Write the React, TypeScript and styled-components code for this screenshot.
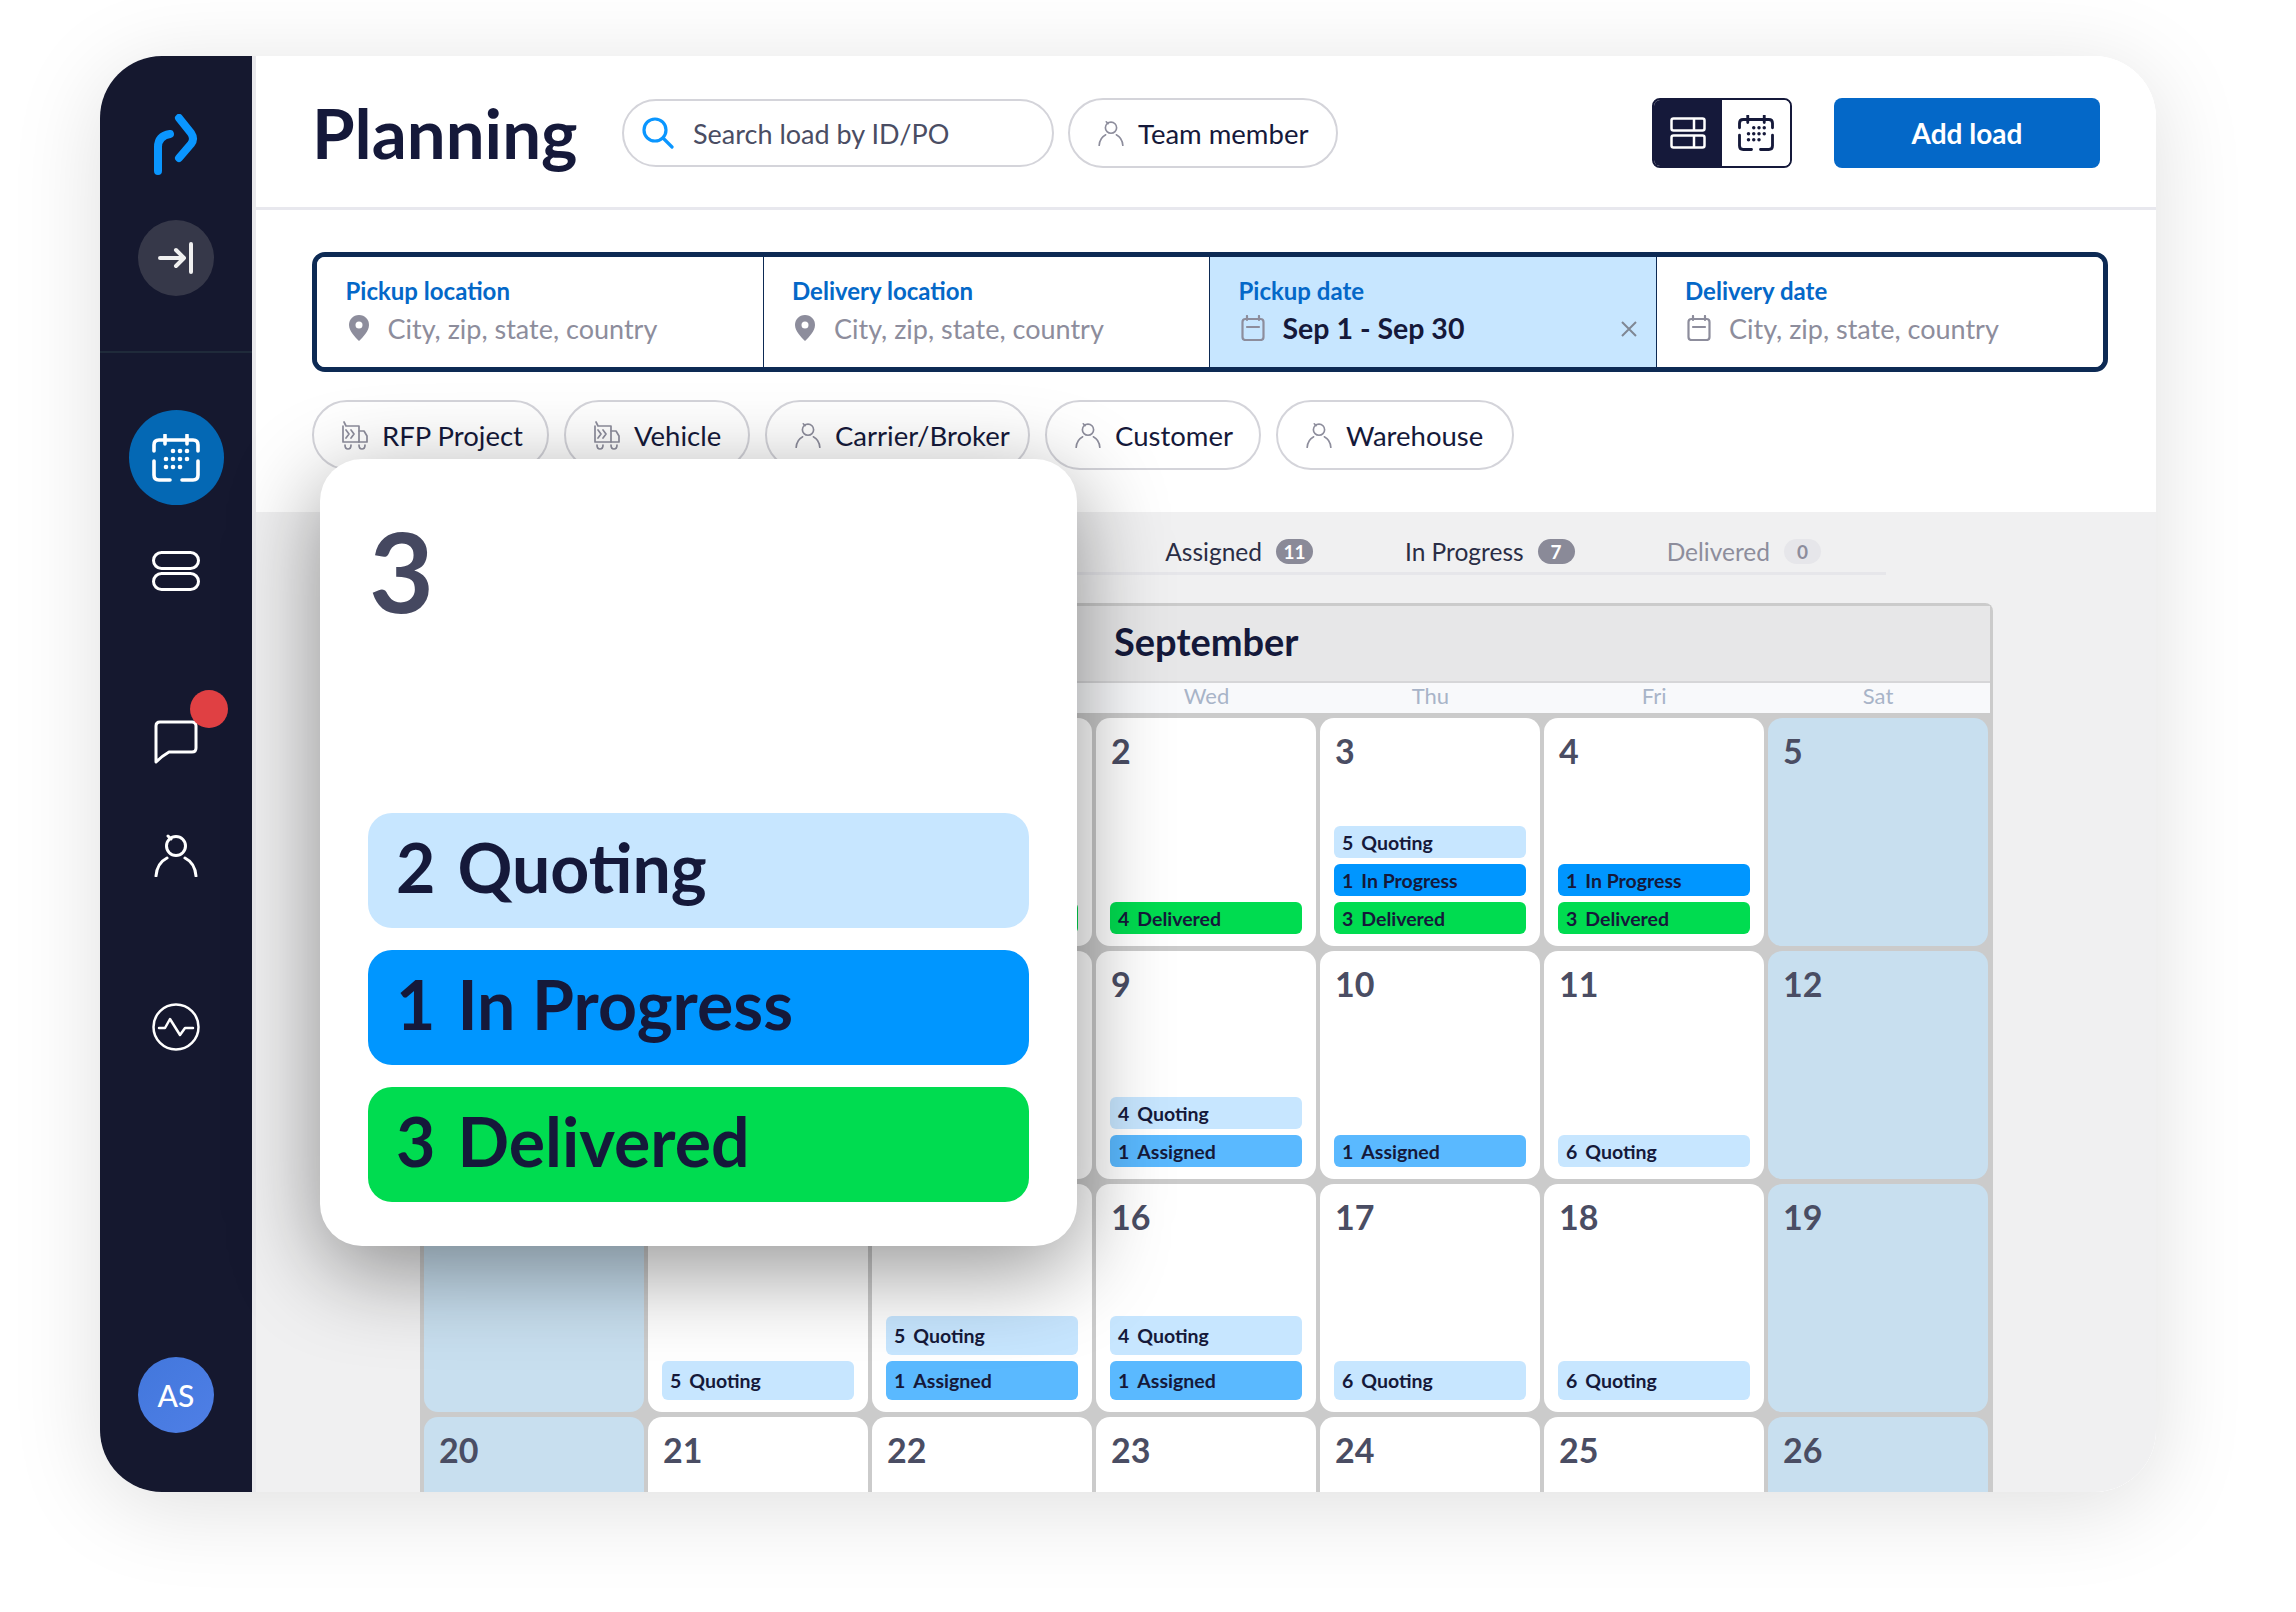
import React from "react";
import styled, { createGlobalStyle } from "styled-components";

const Global = createGlobalStyle`
  html, body { margin: 0; padding: 0; background: #fff; }
  body { font-family: "Lato", "Noto Sans", sans-serif; color: #15193a; }
  * { box-sizing: border-box; }
`;

const Page = styled.div`
  width: 2296px; height: 1612px; overflow: hidden; background: #fff;
  padding: 56px 0 0 100px;
`;
const Frame = styled.div`
  position: relative; display: flex; width: 2056px; height: 1436px; border-radius: 62px;
  overflow: hidden; background: #fff;
`;
const FrameShadow = styled.div`
  width: 2056px; height: 1436px; border-radius: 62px;
  box-shadow: 0 14px 90px rgba(0, 0, 0, 0.13);
`;

const Sidebar = styled.aside`
  width: 152px; flex: none; background: #15182f; display: flex; flex-direction: column; align-items: center;
  padding-top: 58px;
`;
const LogoMark = styled.svg`width: 50px; height: 62px; flex: none;`;
const CollapseButton = styled.div`
  width: 76px; height: 76px; border-radius: 50%; background: #363849; margin-top: 44px; flex: none;
  display: flex; align-items: center; justify-content: center;
`;
const SideDivider = styled.div`width: 100%; height: 2px; background: #1f2a3a; margin-top: 55px; flex: none;`;
const ActiveItem = styled.div`
  width: 95px; height: 95px; border-radius: 50%; background: #0468b4; margin-top: 57px; flex: none;
  display: flex; align-items: center; justify-content: center;
`;
const NavItem = styled.div<{ $top: number }>`
  position: relative; width: 48px; flex: none; margin-top: ${(p) => p.$top}px;
  display: flex; justify-content: center;
`;
const RedDot = styled.span`
  position: absolute; left: 38px; top: -30px; width: 38px; height: 38px; border-radius: 50%; background: #e04043;
`;
const Avatar = styled.div`
  width: 76px; height: 76px; border-radius: 50%; background: linear-gradient(135deg, #4277dc, #4f7fe6);
  color: #fff; font-size: 30px; font-weight: 500; display: flex; align-items: center; justify-content: center;
  margin-top: auto; margin-bottom: 59px; flex: none;
`;

const Main = styled.main`
  flex: 1; min-width: 0; display: flex; flex-direction: column; border-left: 4px solid #e9e9ec; background: #fff;
`;
const Header = styled.header`
  height: 154px; flex: none; display: flex; align-items: center; border-bottom: 3px solid #e8e8ee;
  padding: 3px 56px 0 56px;
`;
const Title = styled.h1`
  margin: 0; width: 310px; flex: none; font-size: 69px; font-weight: 700; color: #15193a; line-height: 1; padding-bottom: 2px;
`;
const SearchBox = styled.div`
  width: 432px; height: 68px; border: 2px solid #d4d4da; border-radius: 34px; display: flex; align-items: center;
  padding-left: 18px; gap: 19px; font-size: 27px; color: #4a4d63; flex: none; margin-right: 14px;
`;
const Pill = styled.div<{ $w: number }>`
  width: ${(p) => p.$w}px; height: 70px; border: 2px solid #d4d4da; border-radius: 35px; display: flex; align-items: center;
  padding-left: 28px; gap: 14px; font-size: 27.5px; color: #15193a; flex: none; background: #fff;
`;
const ViewToggle = styled.div`
  margin-left: auto; width: 140px; height: 70px; border-radius: 8px; border: 2px solid #15193a; display: flex; overflow: hidden; flex: none;
`;
const ToggleSide = styled.div<{ $on?: boolean }>`
  flex: 1; display: flex; align-items: center; justify-content: center; background: ${(p) => (p.$on ? "#15193a" : "#fff")};
`;
const AddButton = styled.button`
  margin-left: 42px; width: 266px; height: 70px; border: 0; border-radius: 8px; background: #0468c8; color: #fff;
  font-family: inherit; font-size: 28px; font-weight: 700; flex: none;
`;

const Filters = styled.section`
  flex: none; padding: 42px 48px 0 56px; display: flex; flex-direction: column; gap: 28px; height: 302px;
`;
const FilterBox = styled.div`
  height: 120px; border: 5px solid #0d2a54; border-radius: 13px; display: grid; grid-template-columns: repeat(4, 1fr); overflow: hidden; flex: none;
`;
const FilterCell = styled.div<{ $active?: boolean; $last?: boolean }>`
  position: relative; padding: 20px 0 0 28.5px; background: ${(p) => (p.$active ? "#c7e6ff" : "#fff")};
  border-right: ${(p) => (p.$last ? "0" : "1.5px solid #0d2a54")};
`;
const FilterLabel = styled.div`
  height: 28px; line-height: 28px; font-size: 24px; font-weight: 700; color: #0468c8;
`;
const FilterValue = styled.div<{ $filled?: boolean }>`
  display: flex; align-items: center; gap: 18px; height: 28px; margin-top: 9px; padding-left: 2px; white-space: nowrap;
  font-size: ${(p) => (p.$filled ? 28.5 : 27)}px; font-weight: ${(p) => (p.$filled ? 700 : 400)};
  color: ${(p) => (p.$filled ? "#15193a" : "#8d8d9c")};
`;
const ClearMark = styled.svg`position: absolute; right: 18px; top: 63px; width: 18px; height: 18px;`;
const ChipRow = styled.div`display: flex; gap: 15px; flex: none;`;

const Board = styled.section`
  flex: 1; min-height: 0; overflow: hidden; background: #f0f0f1; padding-left: 164px;
`;
const Tabs = styled.div`
  width: 1466px; height: 63px; padding: 19px 65px 0 0; display: flex; justify-content: flex-end; align-items: center; gap: 92px;
  border-bottom: 3px solid #e6e6ea;
`;
const Tab = styled.div<{ $muted?: boolean }>`
  display: flex; align-items: center; gap: 14px; font-size: 24.5px; color: ${(p) => (p.$muted ? "#8d8d9c" : "#2a2d45")};
`;
const Count = styled.span<{ $muted?: boolean }>`
  width: 37px; height: 25px; border-radius: 13px; display: flex; align-items: center; justify-content: center; font-size: 19px; font-weight: 700;
  background: ${(p) => (p.$muted ? "#e6e6ea" : "#8a8a98")}; color: ${(p) => (p.$muted ? "#8d8d9c" : "#fff")};
`;
const Calendar = styled.div`
  width: 1573px; margin-top: 28px; border: 3px solid #cbcbcb; border-bottom: 0; border-radius: 8px 8px 0 0;
`;
const MonthBar = styled.div`
  height: 75px; background: #e7e7e8; display: flex; align-items: center; padding: 0 0 6px 691px;
  font-size: 38px; font-weight: 700; color: #15193a;
`;
const Weekdays = styled.div`
  height: 32px; background: #f8f9fb; border-top: 2px solid #d6d6d8; display: grid; grid-template-columns: repeat(7, 1fr);
`;
const Weekday = styled.div`
  text-align: center; font-size: 22px; line-height: 25px; color: #a8b4c8;
`;
const DayGrid = styled.div`
  background: #cbcbcb; padding: 5px 2px 0 1px; display: grid; grid-template-columns: repeat(7, 1fr); grid-auto-rows: 228px; gap: 5px 4px;
`;
const DayCell = styled.div<{ $weekend?: boolean }>`
  border-radius: 14px; padding: 14px 14px 12px; display: flex; flex-direction: column; gap: 6px;
  background: ${(p) => (p.$weekend ? "#c8dfef" : "#fff")};
`;
const DayNumber = styled.div`
  height: 40px; line-height: 38px; padding-left: 1px; font-size: 34px; font-weight: 700; color: #4a4d63; margin-bottom: auto;
`;
const palette: Record<string, string> = { Quoting: "#c7e6ff", "In Progress": "#0096ff", Delivered: "#00dc50", Assigned: "#5ab9ff" };
const DayBar = styled.div<{ $kind: string; $tall?: boolean }>`
  height: ${(p) => (p.$tall ? 39 : 32)}px; border-radius: 6px; padding-left: 8px; display: flex; align-items: center; gap: 8px;
  font-size: 19.5px; font-weight: 700; color: #15193a; background: ${(p) => palette[p.$kind]}; flex: none;
`;

const Popup = styled.div`
  position: absolute; left: 220px; top: 403px; width: 757px; height: 787px; background: #fff; border-radius: 42px;
  box-shadow: 0 24px 90px rgba(0, 0, 0, 0.42); padding: 48px 48px 44px; display: flex; flex-direction: column; gap: 22px;
`;
const PopupDay = styled.div`
  font-size: 112px; line-height: 1; font-weight: 700; color: #454860; margin-bottom: auto; padding: 7px 0 0 1px;
`;
const PopupBar = styled.div<{ $kind: string }>`
  height: 115px; border-radius: 24px; display: flex; align-items: center; gap: 22px; padding: 0 0 8px 28px;
  font-size: 68px; font-weight: 700; color: #15193a; background: ${(p) => palette[p.$kind]}; flex: none;
`;

const Ico = styled.svg`flex: none; display: block;`;

const Logo = () => (
  <LogoMark viewBox="0 0 50 62" fill="none" stroke="#0a96ff" strokeWidth="8" strokeLinecap="round" strokeLinejoin="round">
    <path d="M7 57V33Q7 22 19 20" />
    <path d="M28 4L40 19Q44 25 40 30L28 44" />
  </LogoMark>
);
const CalendarIcon = ({ size, color, w }: { size: number; color: string; w: number }) => (
  <Ico width={size} height={size} viewBox="0 0 48 48" fill="none" stroke={color} strokeWidth={w} strokeLinecap="round">
    <path d="M2 17V11Q2 6 7 6H41Q46 6 46 11V17M13 1V10M35 1V10M2 27V41Q2 46 7 46H18M30 46H41Q46 46 46 41V27" />
    <g fill={color} stroke="none">
      {[[24, 17], [31, 17], [38, 17], [17, 25], [24, 25], [31, 25], [38, 25], [17, 33], [24, 33], [31, 33]].map(([x, y]) => (
        <circle key={`${x}-${y}`} cx={x - 3} cy={y} r="2.3" />
      ))}
    </g>
  </Ico>
);
const PersonIcon = ({ size, color, w }: { size: number; color: string; w: number }) => (
  <Ico width={size} height={size} viewBox="0 0 44 44" fill="none" stroke={color} strokeWidth={w} strokeLinecap="round">
    <circle cx="22" cy="13" r="9.5" />
    <path d="M14 3L17 6M2 43Q3 30 13 25M42 43Q41 30 31 25" />
  </Ico>
);
const TruckIcon = () => (
  <Ico width="26" height="30" viewBox="0 0 26 30" fill="none" stroke="#8d8d9c" strokeWidth="1.7" strokeLinecap="round" strokeLinejoin="round">
    <path d="M2 2L4 6H17V22H1V6" />
    <path d="M17 11H22L25 16V22H17M4 10L7 14L4 18M9 10L12 14L9 18" />
    <path d="M3 25Q3 29 6 29Q9 29 9 25M17 25Q17 29 20 29Q23 29 23 25" />
  </Ico>
);
const Pin = () => (
  <Ico width="22" height="26" viewBox="0 0 22 26">
    <path d="M11 0C5 0 1 4.500 1 10C1 16 7 22 11 26C15 22 21 16 21 10C21 4.500 17 0 11 0Z" fill="#8d8d9c" />
    <circle cx="11" cy="10" r="3.500" fill="#fff" />
  </Ico>
);
const SmallCal = () => (
  <Ico width="24" height="26" viewBox="0 0 24 26" fill="none" stroke="#8d8d9c" strokeWidth="2.200" strokeLinecap="round">
    <rect x="1.500" y="4" width="21" height="21" rx="3" />
    <path d="M6 1V5M18 1V5M6 12H18" />
  </Ico>
);

type BarData = [string, string];
type Day = { n: number | string; bars?: BarData[] };
const rows: Day[][] = [
  [{ n: 30 }, { n: 31 }, { n: 1, bars: [["3", "Delivered"]] }, { n: 2, bars: [["4", "Delivered"]] }, { n: 3, bars: [["5", "Quoting"], ["1", "In Progress"], ["3", "Delivered"]] }, { n: 4, bars: [["1", "In Progress"], ["3", "Delivered"]] }, { n: 5 }],
  [{ n: 6 }, { n: 7 }, { n: 8 }, { n: 9, bars: [["4", "Quoting"], ["1", "Assigned"]] }, { n: 10, bars: [["1", "Assigned"]] }, { n: 11, bars: [["6", "Quoting"]] }, { n: 12 }],
  [{ n: 13 }, { n: 14, bars: [["5", "Quoting"]] }, { n: 15, bars: [["5", "Quoting"], ["1", "Assigned"]] }, { n: 16, bars: [["4", "Quoting"], ["1", "Assigned"]] }, { n: 17, bars: [["6", "Quoting"]] }, { n: 18, bars: [["6", "Quoting"]] }, { n: 19 }],
  [{ n: 20 }, { n: 21 }, { n: 22 }, { n: 23 }, { n: 24 }, { n: 25 }, { n: 26 }],
];
const weekdays = ["Sun", "Mon", "Tue", "Wed", "Thu", "Fri", "Sat"];

const Filter = ({ label, children, active, last }: { label: string; children: React.ReactNode; active?: boolean; last?: boolean }) => (
  <FilterCell $active={active} $last={last}>
    <FilterLabel>{label}</FilterLabel>
    {children}
  </FilterCell>
);

export default function App() {
  return (
    <Page>
      <Global />
      <FrameShadow>
        <Frame>
          <Sidebar>
            <Logo />
            <CollapseButton>
              <Ico width="36" height="32" viewBox="0 0 36 32" fill="none" stroke="#f0f0f0" strokeWidth="4" strokeLinecap="round" strokeLinejoin="round">
                <path d="M2 16H26M18 8L26 16L18 24M33 2V30" />
              </Ico>
            </CollapseButton>
            <SideDivider />
            <ActiveItem><CalendarIcon size={48} color="#fff" w={3.6} /></ActiveItem>
            <NavItem $top={46}>
              <Ico width="48" height="40" viewBox="0 0 48 40" fill="none" stroke="#fff" strokeWidth="3">
                <rect x="1.500" y="1.500" width="45" height="16" rx="8" />
                <rect x="1.500" y="22.500" width="45" height="16" rx="8" />
              </Ico>
            </NavItem>
            <NavItem $top={129}>
              <Ico width="44" height="44" viewBox="0 0 44 44" fill="none" stroke="#fff" strokeWidth="3" strokeLinecap="round" strokeLinejoin="round">
                <path d="M2 42V6Q2 2 6 2H38Q42 2 42 6V28Q42 32 38 32H15Q8 36 2 42Z" />
              </Ico>
              <RedDot />
            </NavItem>
            <NavItem $top={69}><PersonIcon size={44} color="#fff" w={3} /></NavItem>
            <NavItem $top={126}>
              <Ico width="48" height="48" viewBox="0 0 48 48" fill="none" stroke="#fff" strokeWidth="2.500" strokeLinecap="round" strokeLinejoin="round">
                <circle cx="24" cy="24" r="22.500" />
                <path d="M7 25H13L18 16L28 32L33 25H41" />
              </Ico>
            </NavItem>
            <Avatar>AS</Avatar>
          </Sidebar>
          <Main>
            <Header>
              <Title>Planning</Title>
              <SearchBox>
                <Ico width="32" height="32" viewBox="0 0 32 32" fill="none" stroke="#0a96ff" strokeWidth="3.200" strokeLinecap="round">
                  <circle cx="13" cy="13" r="11" />
                  <path d="M21 21L30 30" />
                </Ico>
                Search load by ID/PO
              </SearchBox>
              <Pill $w={270}><PersonIcon size={26} color="#8d8d9c" w={2.800} />Team member</Pill>
              <ViewToggle>
                <ToggleSide $on>
                  <Ico width="36" height="32" viewBox="0 0 36 32" fill="none" stroke="#fff" strokeWidth="2.500">
                    <rect x="1.500" y="1.500" width="33" height="12" rx="2" />
                    <rect x="1.500" y="18.500" width="33" height="12" rx="2" />
                    <path d="M24 1.500V13.500M24 18.500V30.500" />
                  </Ico>
                </ToggleSide>
                <ToggleSide><CalendarIcon size={36} color="#15193a" w={3.800} /></ToggleSide>
              </ViewToggle>
              <AddButton>Add load</AddButton>
            </Header>
            <Filters>
              <FilterBox>
                <Filter label="Pickup location"><FilterValue><Pin />City, zip, state, country</FilterValue></Filter>
                <Filter label="Delivery location"><FilterValue><Pin />City, zip, state, country</FilterValue></Filter>
                <Filter label="Pickup date" active>
                  <FilterValue $filled><SmallCal />Sep 1 - Sep 30</FilterValue>
                  <ClearMark viewBox="0 0 18 18" fill="none" stroke="#7f8794" strokeWidth="2"><path d="M2 2L16 16M16 2L2 16" /></ClearMark>
                </Filter>
                <Filter label="Delivery date" last><FilterValue><SmallCal />City, zip, state, country</FilterValue></Filter>
              </FilterBox>
              <ChipRow>
                <Pill $w={237}><TruckIcon />RFP Project</Pill>
                <Pill $w={186}><TruckIcon />Vehicle</Pill>
                <Pill $w={265}><PersonIcon size={26} color="#8d8d9c" w={2.800} />Carrier/Broker</Pill>
                <Pill $w={216}><PersonIcon size={26} color="#8d8d9c" w={2.800} />Customer</Pill>
                <Pill $w={238}><PersonIcon size={26} color="#8d8d9c" w={2.800} />Warehouse</Pill>
              </ChipRow>
            </Filters>
            <Board>
              <Tabs>
                <Tab>Assigned <Count>11</Count></Tab>
                <Tab>In Progress <Count>7</Count></Tab>
                <Tab $muted>Delivered <Count $muted>0</Count></Tab>
              </Tabs>
              <Calendar>
                <MonthBar>September</MonthBar>
                <Weekdays>{weekdays.map((d) => <Weekday key={d}>{d}</Weekday>)}</Weekdays>
                <DayGrid>
                  {rows.flatMap((row, r) =>
                    row.map((day, i) => (
                      <DayCell key={`${r}-${i}`} $weekend={i === 0 || i === 6}>
                        <DayNumber>{day.n}</DayNumber>
                        {(day.bars ?? []).map(([count, kind]) => (
                          <DayBar key={kind} $kind={kind} $tall={r === 2}><span>{count}</span><span>{kind}</span></DayBar>
                        ))}
                      </DayCell>
                    ))
                  )}
                </DayGrid>
              </Calendar>
            </Board>
          </Main>
          <Popup>
            <PopupDay>3</PopupDay>
            <PopupBar $kind="Quoting"><span>2</span><span>Quoting</span></PopupBar>
            <PopupBar $kind="In Progress"><span>1</span><span>In Progress</span></PopupBar>
            <PopupBar $kind="Delivered"><span>3</span><span>Delivered</span></PopupBar>
          </Popup>
        </Frame>
      </FrameShadow>
    </Page>
  );
}
